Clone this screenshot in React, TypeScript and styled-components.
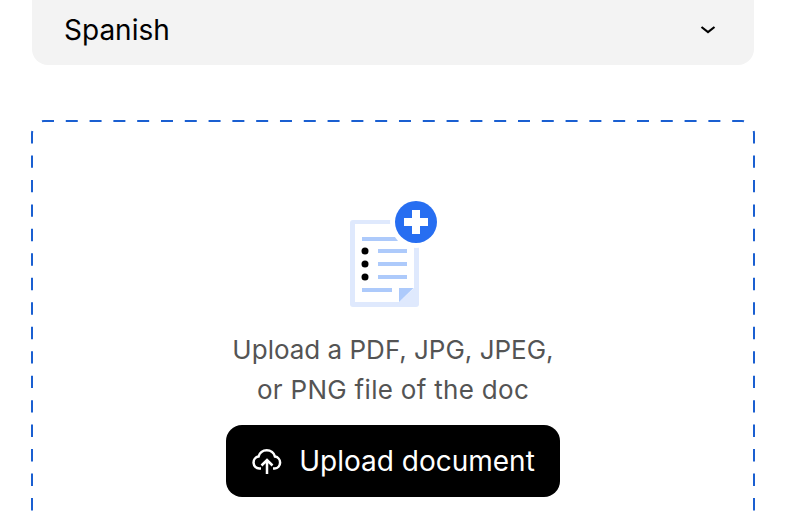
import React from 'react';
import styled, { createGlobalStyle } from 'styled-components';

const GlobalStyle = createGlobalStyle`
  html, body {
    margin: 0;
    height: 100%;
    overflow: hidden;
    background: #fff;
  }
`;

const Page = styled.div`
  box-sizing: border-box;
  display: flex;
  flex-direction: column;
  gap: 56px;
  height: 511px;
  overflow: hidden;
  padding: 0 32px;
  font-family: 'Inter', 'Liberation Sans', sans-serif;
`;

const Select = styled.div`
  align-items: center;
  background: #f3f3f3;
  border-radius: 0 0 16px 16px;
  box-sizing: border-box;
  color: #000;
  display: flex;
  flex-shrink: 0;
  font-size: 28px;
  height: 65px;
  justify-content: space-between;
  padding: 0 38px 6px 32px;
`;

const DropZone = styled.div`
  align-items: center;
  box-sizing: border-box;
  display: flex;
  flex-direction: column;
  flex-shrink: 0;
  height: 460px;
  padding-top: 80px;
  position: relative;
`;

const DashedEdge = styled.svg`
  height: 100%;
  left: 0;
  overflow: visible;
  position: absolute;
  top: 0;
  width: 100%;
`;

const IconSlot = styled.div`
  display: flex;
  margin-left: 2px;
`;

const Hint = styled.p`
  color: #545454;
  font-size: 26px;
  font-weight: 400;
  line-height: 40px;
  margin: 22px 0 15px;
  text-align: center;
`;

const HintLine = styled.span<{ $spacing: number }>`
  display: block;
  letter-spacing: ${props => props.$spacing}px;
`;

const UploadButton = styled.button`
  align-items: center;
  background: #000;
  border: 0;
  border-radius: 16px;
  color: #fff;
  display: flex;
  font-family: inherit;
  font-size: 28px;
  gap: 17px;
  height: 72px;
  padding: 0 25px 0 26px;
`;

const DocIcon = () => (
  <svg width="88" height="107" viewBox="0 0 88 107" fill="none">
    <rect x="0" y="19" width="69" height="87" rx="3" fill="#dfe9fd" />
    <rect x="5" y="23" width="59" height="78" fill="#fff" />
    <path d="M64 87 V101 H49 Z" fill="#dfe9fd" />
    <path d="M49 87 H63.5 L49 101 Z" fill="#adcafb" />
    <rect x="12" y="36" width="36" height="4" fill="#adcafb" />
    <rect x="28" y="48" width="29" height="4" fill="#adcafb" />
    <rect x="28" y="61" width="29" height="4" fill="#adcafb" />
    <rect x="28" y="74" width="29" height="4" fill="#adcafb" />
    <rect x="12" y="87" width="30" height="4" fill="#adcafb" />
    <circle cx="15" cy="50" r="3.5" fill="#000" />
    <circle cx="15" cy="63" r="3.5" fill="#000" />
    <circle cx="15" cy="76" r="3.5" fill="#000" />
    <circle cx="66" cy="21" r="26" fill="#fff" />
    <circle cx="66" cy="21" r="21" fill="#276ef1" />
    <rect x="54" y="17" width="24" height="8" fill="#fff" />
    <rect x="62" y="9" width="8" height="24" fill="#fff" />
  </svg>
);

const CloudIcon = () => (
  <svg width="30" height="26" viewBox="0 0 30 26" fill="none" stroke="#fff" strokeWidth="2.5">
    <path d="M9 20.5 H7.3 A6 6 0 0 1 6.5 8.6 A8.5 8.5 0 0 1 23 8.6 A6 6 0 0 1 22.7 20.5 H21" />
    <path d="M15 26 V12 M9.5 17.5 L15 12 L20.5 17.5" />
  </svg>
);

const Chevron = () => (
  <svg width="16" height="10" viewBox="0 0 16 10" fill="none" stroke="#000" strokeWidth="2.2">
    <path d="M1.5 2 L8 7 L14.5 2" />
  </svg>
);

export default function App() {
  return (
    <Page>
      <GlobalStyle />
      <Select>
        <span>Spanish</span>
        <Chevron />
      </Select>
      <DropZone>
        <DashedEdge fill="none" stroke="#1a5fd1" strokeWidth="2">
          <path strokeDasharray="12 11.8" d="M10 0.3 Q11 0 12 0 H710 Q711 0 712 0.3" />
          <path strokeDasharray="12.4 12.07" d="M0.3 10 L0 12 V400" />
          <path strokeDasharray="12.4 12.07" d="M721.7 10 L722 12 V400" />
        </DashedEdge>
        <IconSlot>
          <DocIcon />
        </IconSlot>
        <Hint>
          <HintLine $spacing={0}>Upload a PDF, JPG, JPEG,</HintLine>
          <HintLine $spacing={0.3}>or PNG file of the doc</HintLine>
        </Hint>
        <UploadButton>
          <CloudIcon />
          Upload document
        </UploadButton>
      </DropZone>
    </Page>
  );
}
